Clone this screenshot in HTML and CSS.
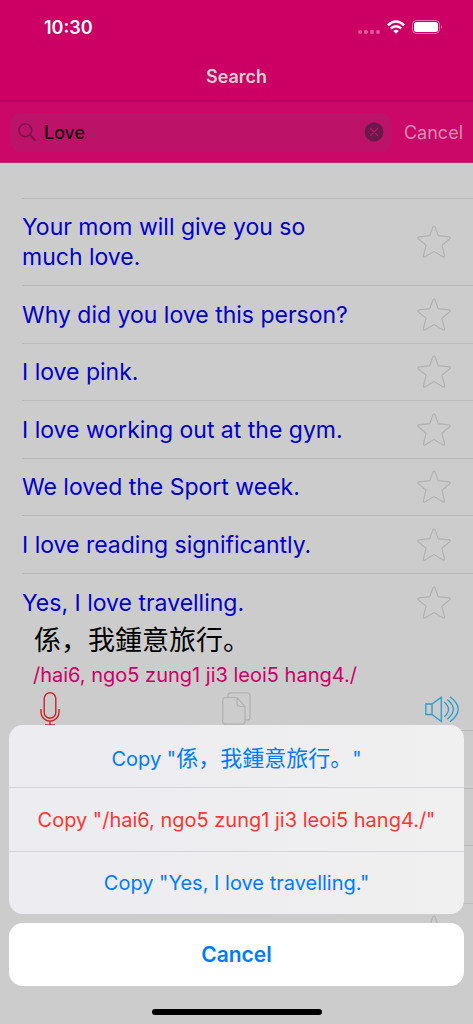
FILE: index.html
```html
<!DOCTYPE html>
<html lang="en">
<head>
<meta charset="utf-8">
<meta name="viewport" content="width=device-width, initial-scale=1">
<title>Search</title>
<link rel="stylesheet" href="styles.css">
</head>
<body>
<svg class="symbols" aria-hidden="true">
  <symbol id="star" viewBox="0 0 34 34"><path d="M16 1.800 Q17 .2 18 1.800 L21.300 10.600 L32 11.900 Q34 12.400 32.700 13.800 L24.900 20.200 L27.600 30.800 Q27.700 32.600 26.200 31.900 L17 26.600 L7.800 31.900 Q6.300 32.600 6.400 30.800 L9.100 20.200 L1.300 13.800 Q0 12.400 2 11.900 L12.700 10.600 Z"/></symbol>
</svg>
<div class="screen">
  <header class="top">
    <div class="status">
      <span class="time">10:30</span>
      <svg class="signal" width="22" height="4" viewBox="0 0 22 4"><circle cx="2" cy="2" r="2"/><circle cx="8" cy="2" r="2"/><circle cx="14" cy="2" r="2"/><circle cx="20" cy="2" r="2"/></svg>
      <svg class="wifi" width="18" height="14" viewBox="0 0 18 14"><path d="M.9 5.200 Q9-2.200 17.100 5.200M3.800 8.500 Q9 4 14.200 8.500" fill="none" stroke="#fff" stroke-width="2.600"/><path d="M6.200 11 Q9 8.400 11.800 11 L9 13.800Z" fill="#fff"/></svg>
      <svg class="battery" width="31" height="14" viewBox="0 0 31 14"><rect x=".5" y=".5" width="27" height="13" rx="4" fill="none" stroke="#fff" stroke-opacity=".45"/><rect x="2" y="2" width="24" height="10" rx="2.5" fill="#fff"/><path d="M29 5 Q31 7 29 9Z" fill="#fff" fill-opacity=".5"/></svg>
    </div>
    <h1 class="title">Search</h1>
  </header>
  <form class="search">
    <div class="field">
      <svg width="18" height="18" viewBox="0 0 18 18" fill="none" stroke="#7a124d" stroke-width="1.4" stroke-linecap="round"><circle cx="7.3" cy="7.3" r="6.4"/><path d="M12 12l5 5" stroke-width="1.8"/></svg>
      <input type="text" value="Love" aria-label="Search">
      <button type="button" class="clear" aria-label="Clear"><svg width="20" height="20" viewBox="0 0 20 20"><circle cx="10" cy="10" r="9.4" fill="#68194a"/><path d="M6.5 6.5l7 7M13.5 6.5l-7 7" stroke="#c01068" stroke-width="1.4" stroke-linecap="round"/></svg></button>
    </div>
    <button type="button" class="cancel">Cancel</button>
  </form>
  <ul class="list">
    <li class="row two"><p>Your mom will give you so much love.</p><button class="star" aria-label="Favourite"><svg><use href="#star"/></svg></button></li>
    <li class="row"><p>Why did you love this person?</p><button class="star" aria-label="Favourite"><svg><use href="#star"/></svg></button></li>
    <li class="row"><p>I love pink.</p><button class="star" aria-label="Favourite"><svg><use href="#star"/></svg></button></li>
    <li class="row"><p>I love working out at the gym.</p><button class="star" aria-label="Favourite"><svg><use href="#star"/></svg></button></li>
    <li class="row"><p>We loved the Sport week.</p><button class="star" aria-label="Favourite"><svg><use href="#star"/></svg></button></li>
    <li class="row"><p>I love reading significantly.</p><button class="star" aria-label="Favourite"><svg><use href="#star"/></svg></button></li>
    <li class="open">
      <div class="line"><p>Yes, I love travelling.</p><button class="star" aria-label="Favourite"><svg><use href="#star"/></svg></button></div>
      <p class="hanzi" lang="zh">係，我鍾意旅行。</p>
      <p class="roman">/hai6, ngo5 zung1 ji3 leoi5 hang4./</p>
      <div class="tools">
        <button aria-label="Record"><svg width="20" height="36" viewBox="0 0 20 36" fill="none" stroke="#cf2027" stroke-width="1.4"><rect x="4.2" y=".8" width="11.6" height="25.4" rx="5.8"/><path d="M1 17v3.2a9 9 0 0 0 18 0V17M10 29v4M5 33h10"/></svg></button>
        <button aria-label="Copy"><svg width="29" height="36" viewBox="0 0 29 36" fill="none" stroke="#b1b1b1" stroke-width="1.2"><path d="M6 5V3.500q0-2.700 2.700-2.700h16.600q2.700 0 2.700 2.700v22q0 2.700-2.700 2.700H23M3.500 5.500H15l8 9v15q0 2.700-2.700 2.700H3.500Q.8 32.200.8 29.500V8.200q0-2.700 2.700-2.700ZM15 5.500v6q0 3 3 3h5"/></svg></button>
        <button aria-label="Play"><svg width="34" height="36" viewBox="0 0 34 36" fill="none" stroke="#2b9cc9" stroke-width="1.300"><path d="M7 12H.8v10.500H7M7 12L16.300 5.200V29.500L7 22.500ZM7 12v10.500M19.300 10q8.400 7.300 0 14.700M22.300 7.500q12 9.800 0 19.700M25 4.800q16.400 12.500 0 25"/></svg></button>
      </div>
    </li>
    <li class="row"></li>
    <li class="row"></li>
    <li class="row"></li>
    <li class="row last"><button class="star" aria-label="Favourite"><svg><use href="#star"/></svg></button></li>
  </ul>
  <div class="sheet" role="dialog" aria-label="Copy options">
    <div class="options">
      <button>Copy "<span lang="zh">係，我鍾意旅行。</span>"</button>
      <button class="red">Copy "/hai6, ngo5 zung1 ji3 leoi5 hang4./"</button>
      <button>Copy "Yes, I love travelling."</button>
    </div>
    <button class="dismiss">Cancel</button>
    <div class="home"></div>
  </div>
</div>
</body>
</html>
```

FILE: styles.css
```css
* { box-sizing: border-box; }
body, p, h1, ul { margin: 0; padding: 0; }
body {
  background: #ccc;
  font-family: Inter, "Noto Sans CJK SC", sans-serif;
}
button {
  border: 0;
  padding: 0;
  background: none;
  font: inherit;
  color: inherit;
}
svg { display: block; }
.symbols { position: absolute; width: 0; height: 0; }
.screen {
  position: relative;
  height: 100vh;
  overflow: hidden;
  background: #ccc;
}

.top {
  background: #cc0064;
  border-bottom: 2px solid #b70060;
  padding-bottom: 11px;
}
.status {
  display: flex;
  align-items: center;
  height: 54px;
  padding: 0 30px 0 44px;
}
.time {
  flex: 1;
  color: #fff;
  font-size: 18px;
  font-weight: 600;
}
.signal { fill: #e05c9c; margin: 9px 7px 0 0; }
.wifi { margin-right: 7px; }
.title {
  text-align: center;
  color: #d5d0d2;
  font-size: 18px;
  line-height: 24px;
  font-weight: 600;
  padding-top: 11px;
}

.search {
  display: flex;
  align-items: center;
  gap: 12px;
  height: 61px;
  padding: 0 10px;
  background: #cb0867;
  border-bottom: 1px solid #b52a70;
}
.field {
  flex: 1;
  display: flex;
  align-items: center;
  gap: 8px;
  min-width: 0;
  height: 39px;
  padding: 0 8px;
  border-radius: 11px;
  background: #bc1268;
}
.field input {
  flex: 1;
  min-width: 0;
  border: 0;
  padding: 0;
  outline: 0;
  background: none;
  color: #000;
  font: 18px Inter, sans-serif;
}
.cancel { color: #d78db0; font-size: 18px; }

.list { list-style: none; padding: 35px 0 0 22px; }
.row, .line { display: flex; align-items: center; justify-content: space-between; padding-right: 22px; }
.row, .open { border-top: 1px solid #b9b9b9; }
.row { height: 57px; }
.row:nth-child(even) { height: 58px; }
.row.two { height: 87px; }
.row p, .line p {
  max-width: 328px;
  color: #0000ca;
  font-size: 23px;
  line-height: 30px;
  white-space: nowrap;
}
.row.two p { max-width: 310px; white-space: normal; }
.star { margin-left: auto; }
.star svg {
  width: 34px;
  height: 34px;
  fill: none;
  stroke: #b2b2b2;
  stroke-width: 1.2;
}
.open { height: 157px; }
.line { height: 57px; }
.open .hanzi {
  margin-top: -8px;
  padding-left: 12px;
  color: #000;
  font-size: 27px;
  line-height: 36px;
}
.open .roman {
  padding-left: 11px;
  color: #ca0068;
  font-size: 20px;
  line-height: 32px;
}
.tools {
  display: grid;
  grid-template-columns: 1fr auto 1fr;
  margin-left: -22px;
  padding: 1px 14px 0;
}
.tools button:first-child { justify-self: start; padding-left: 26px; }
.tools button:last-child { justify-self: end; }
.row.last { align-items: flex-start; padding-top: 11px; }

.sheet {
  position: absolute;
  left: 9px;
  right: 9px;
  bottom: 9px;
  color: #007aff;
  font-size: 20px;
}
.options {
  overflow: hidden;
  border-radius: 14px;
  background: linear-gradient(90deg, #ececf1, #eeeef1 50%, #f0f0f0);
}
.options button { display: block; width: 100%; height: 62px; }
.options button + button { height: 64px; border-top: 1px solid #d4d4d8; }
.options button:last-child { height: 63px; }
.options [lang] { font-size: 22px; }
.options .red { color: #ff3530; }
.dismiss {
  display: block;
  width: 100%;
  height: 63px;
  margin-top: 9px;
  border-radius: 14px;
  background: #fff;
  font-size: 21px;
  font-weight: 600;
}
.home {
  width: 170px;
  height: 6px;
  margin: 23px auto 0;
  border-radius: 3px;
  background: #000;
}
```
